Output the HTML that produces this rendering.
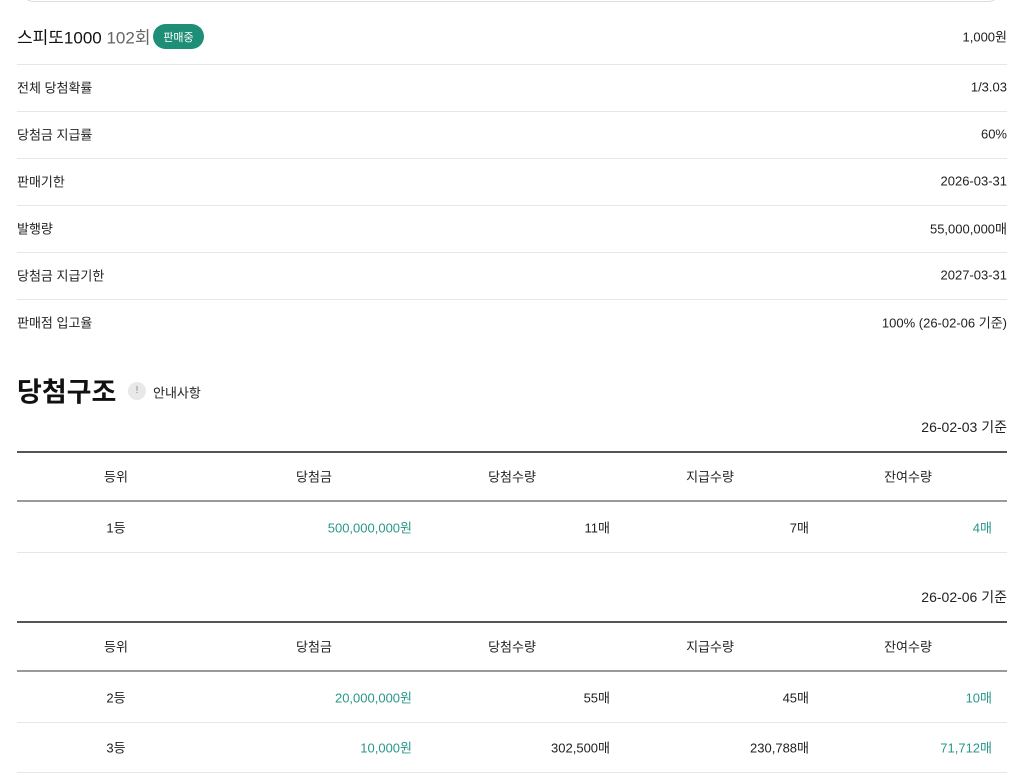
<!DOCTYPE html>
<html><head><meta charset="utf-8">
<style>
*{margin:0;padding:0;box-sizing:border-box}
body{width:1024px;height:773px;overflow:hidden;background:#fff;position:relative;font-family:"Liberation Sans","Noto Sans CJK KR",sans-serif;color:#222}
.a{position:absolute;white-space:nowrap}
.l{left:17px;font-size:13px;transform:translateY(-50%)}
.r{right:17px;font-size:13px;transform:translateY(-50%);text-align:right}
.hl{position:absolute;left:17px;width:990px;height:1px;background:#e6e6e6}
.tk{position:absolute;left:17px;width:990px;height:2px;background:#555}
.md{position:absolute;left:17px;width:990px;height:2px;background:#999}
.c{position:absolute;font-size:13px;transform:translate(-50%,-50%)}
.v{position:absolute;font-size:13px;transform:translateY(-50%);text-align:right}
.g{color:#2a978a}
</style></head><body>
<div class="a" style="left:20px;top:-40px;width:982px;height:42px;border:1px solid #ddd;border-radius:14px"></div>

<div class="a" style="left:17px;top:36px;transform:translateY(-50%);font-size:17px;color:#111">스피또1000 <span style="color:#666">102회</span></div>
<div class="a" style="left:153px;top:24px;width:51px;height:25px;border-radius:13px;background:#1e8f76;color:#fff;font-size:11px;display:flex;align-items:center;justify-content:center;padding-top:1px">판매중</div>
<div class="a r" style="top:36px">1,000원</div>
<div class="hl" style="top:64px"></div>

<div class="a l" style="top:87px">전체 당첨확률</div><div class="a r" style="top:87px">1/3.03</div>
<div class="hl" style="top:111px"></div>
<div class="a l" style="top:134px">당첨금 지급률</div><div class="a r" style="top:134px">60%</div>
<div class="hl" style="top:158px"></div>
<div class="a l" style="top:181px">판매기한</div><div class="a r" style="top:181px">2026-03-31</div>
<div class="hl" style="top:205px"></div>
<div class="a l" style="top:228px">발행량</div><div class="a r" style="top:228px">55,000,000매</div>
<div class="hl" style="top:252px"></div>
<div class="a l" style="top:275px">당첨금 지급기한</div><div class="a r" style="top:275px">2027-03-31</div>
<div class="hl" style="top:299px"></div>
<div class="a l" style="top:322px">판매점 입고율</div><div class="a r" style="top:322px">100% (26-02-06 기준)</div>

<div class="a" style="left:17px;top:390px;transform:translateY(-50%);font-size:27px;font-weight:bold;color:#111">당첨구조</div>
<div class="a" style="left:128px;top:382px;width:18px;height:18px;border-radius:50%;background:#e8e8e8;color:#888;font-size:10px;text-align:center;line-height:18px">!</div>
<div class="a" style="left:153px;top:392px;transform:translateY(-50%);font-size:13px">안내사항</div>

<div class="a r" style="top:427px;font-size:14px">26-02-03 기준</div>
<div class="tk" style="top:451px"></div>
<div class="c" style="left:116px;top:476px">등위</div>
<div class="c" style="left:314px;top:476px">당첨금</div>
<div class="c" style="left:512px;top:476px">당첨수량</div>
<div class="c" style="left:710px;top:476px">지급수량</div>
<div class="c" style="left:908px;top:476px">잔여수량</div>
<div class="md" style="top:500px"></div>
<div class="c" style="left:116px;top:527px">1등</div>
<div class="v g" style="right:612px;top:527px">500,000,000원</div>
<div class="v" style="right:414px;top:527px">11매</div>
<div class="v" style="right:215px;top:527px">7매</div>
<div class="v g" style="right:32px;top:527px">4매</div>
<div class="hl" style="top:552px"></div>

<div class="a r" style="top:597px;font-size:14px">26-02-06 기준</div>
<div class="tk" style="top:621px"></div>
<div class="c" style="left:116px;top:646px">등위</div>
<div class="c" style="left:314px;top:646px">당첨금</div>
<div class="c" style="left:512px;top:646px">당첨수량</div>
<div class="c" style="left:710px;top:646px">지급수량</div>
<div class="c" style="left:908px;top:646px">잔여수량</div>
<div class="md" style="top:670px"></div>
<div class="c" style="left:116px;top:697px">2등</div>
<div class="v g" style="right:612px;top:697px">20,000,000원</div>
<div class="v" style="right:414px;top:697px">55매</div>
<div class="v" style="right:215px;top:697px">45매</div>
<div class="v g" style="right:32px;top:697px">10매</div>
<div class="hl" style="top:722px"></div>
<div class="c" style="left:116px;top:747px">3등</div>
<div class="v g" style="right:612px;top:747px">10,000원</div>
<div class="v" style="right:414px;top:747px">302,500매</div>
<div class="v" style="right:215px;top:747px">230,788매</div>
<div class="v g" style="right:32px;top:747px">71,712매</div>
<div class="hl" style="top:772px"></div>
</body></html>
